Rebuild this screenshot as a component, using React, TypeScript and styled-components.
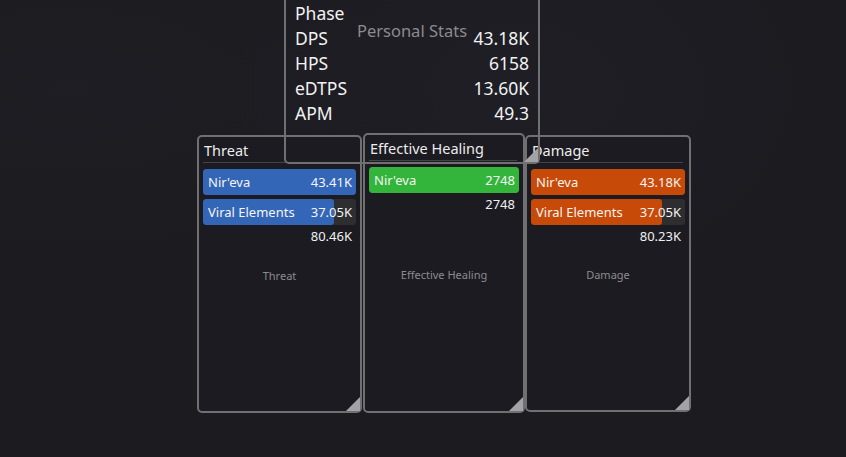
import React from "react";
import styled, { createGlobalStyle } from "styled-components";

type Row = { name: string; value: string; pct: number };

type Meter = {
  title: string;
  x: number;
  y: number;
  w: number;
  h: number;
  color: string;
  rows: Row[];
  total: string;
  z: number;
  mark: number;
};

const meters: Meter[] = [
  {
    title: "Threat",
    x: 197,
    y: 135,
    w: 165,
    h: 278,
    color: "#3466b8",
    total: "80.46K",
    z: 1,
    mark: 131,
    rows: [
      { name: "Nir'eva", value: "43.41K", pct: 100 },
      { name: "Viral Elements", value: "37.05K", pct: 85.4 },
    ],
  },
  {
    title: "Effective Healing",
    x: 363,
    y: 133,
    w: 162,
    h: 280,
    color: "#33b43a",
    total: "2748",
    z: 2,
    mark: 132,
    rows: [{ name: "Nir'eva", value: "2748", pct: 100 }],
  },
  {
    title: "Damage",
    x: 525,
    y: 135,
    w: 166,
    h: 277,
    color: "#c84a08",
    total: "80.23K",
    z: 3,
    mark: 130,
    rows: [
      { name: "Nir'eva", value: "43.18K", pct: 100 },
      { name: "Viral Elements", value: "37.05K", pct: 85 },
    ],
  },
];

const stats = [
  { label: "Phase", value: "" },
  { label: "DPS", value: "43.18K" },
  { label: "HPS", value: "6158" },
  { label: "eDTPS", value: "13.60K" },
  { label: "APM", value: "49.3" },
];

const App = () => {
  return (
    <>
      <GlobalStyle />
      <Desktop>
        {meters.map((m) => (
          <MeterWindow
            key={m.title}
            style={{ left: m.x, top: m.y, width: m.w, height: m.h, zIndex: m.z }}
          >
            <Title>{m.title}</Title>
            <Bars>
              {m.rows.map((r) => (
                <Bar key={r.name}>
                  <Fill style={{ width: `${r.pct}%`, background: m.color }} />
                  <BarName>{r.name}</BarName>
                  <BarValue>{r.value}</BarValue>
                </Bar>
              ))}
            </Bars>
            <Total>{m.total}</Total>
            <Watermark $top={m.mark} $size={11}>
              {m.title}
            </Watermark>
            <Grip />
          </MeterWindow>
        ))}

        <StatsWindow>
          <Watermark $top={27} $size={16.5}>
            Personal Stats
          </Watermark>
          {stats.map((s) => (
            <StatRow key={s.label}>
              <span>{s.label}</span>
              <span>{s.value}</span>
            </StatRow>
          ))}
          <Grip />
        </StatsWindow>
      </Desktop>
    </>
  );
};

export default App;

const GlobalStyle = createGlobalStyle`
  html, body {
    margin: 0;
    padding: 0;
    background: #1c1b20;
    font-family: "Noto Sans", "Open Sans", sans-serif;
    overflow: hidden;
  }
`;

const Desktop = styled.div`
  position: relative;
  width: 846px;
  height: 457px;
  overflow: hidden;
  background:
    radial-gradient(ellipse at 62% 20%, rgba(34, 34, 44, 0.5), transparent 40%),
    radial-gradient(ellipse at 8% 20%, rgba(32, 32, 38, 0.5), transparent 35%),
    #1c1b20;
`;

const WindowBase = styled.div`
  position: absolute;
  box-sizing: border-box;
  border: 2px solid #707072;
  border-radius: 5px;
  color: #f0f0f0;
`;

const StatsWindow = styled(WindowBase)`
  left: 284px;
  top: -10px;
  width: 256px;
  height: 174px;
  z-index: 5;
  padding: 8px 9px 0 9px;
  display: flex;
  flex-direction: column;
  background: transparent;
`;

const StatRow = styled.div`
  position: relative;
  display: flex;
  justify-content: space-between;
  align-items: center;
  height: 25px;
  font-size: 17.5px;
  color: #f2f2f2;
`;

const MeterWindow = styled(WindowBase)`
  background: #1c1b21;
  padding: 1px 4px 0 4px;
  display: flex;
  flex-direction: column;
`;

const Title = styled.div`
  height: 24px;
  line-height: 24px;
  padding-left: 1px;
  font-size: 14.5px;
  color: #ececec;
  border-bottom: 1px solid #444448;
  margin: 0 2px 6px 0;
`;

const Bars = styled.div`
  display: flex;
  flex-direction: column;
  gap: 4px;
`;

const Bar = styled.div`
  position: relative;
  height: 26px;
  border-radius: 3px;
  background: #2e2e31;
  overflow: hidden;
  display: flex;
  align-items: center;
  justify-content: space-between;
  padding: 0 4px 0 5px;
  font-size: 13px;
  color: #f4f4f4;
`;

const Fill = styled.div`
  position: absolute;
  left: 0;
  top: 0;
  bottom: 0;
  border-radius: 3px;
`;

const BarName = styled.span`
  position: relative;
`;

const BarValue = styled.span`
  position: relative;
`;

const Total = styled.div`
  text-align: right;
  font-size: 13px;
  color: #f0f0f0;
  padding-right: 4px;
  height: 22px;
  line-height: 22px;
`;

const Watermark = styled.div<{ $top: number; $size: number }>`
  position: absolute;
  left: 0;
  right: 0;
  top: ${(p) => p.$top}px;
  text-align: center;
  font-size: ${(p) => p.$size}px;
  color: #8b8b8e;
  pointer-events: none;
`;

const Grip = styled.div`
  position: absolute;
  right: 0;
  bottom: 0;
  width: 14px;
  height: 14px;
  background: #a3a3a5;
  clip-path: polygon(100% 0, 100% 100%, 0 100%);
`;
